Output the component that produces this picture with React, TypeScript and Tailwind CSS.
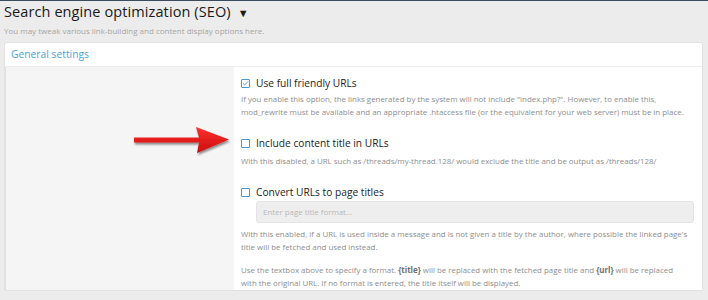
import { Check } from "lucide-react";

function Checkbox({ checked }: { checked?: boolean }) {
  return (
    <span className="flex h-[9px] w-[9px] shrink-0 items-center justify-center rounded-[1px] border border-[#4d9ad0] bg-white">
      {checked && <Check size={7} strokeWidth={3} className="text-[#4d9ad0]" />}
    </span>
  );
}

function Option({
  label,
  checked,
  children,
}: {
  label: string;
  checked?: boolean;
  children?: React.ReactNode;
}) {
  return (
    <div>
      <label className="flex h-[14px] items-center gap-[6px] text-[10.2px] text-[#1d1d1d]">
        <Checkbox checked={checked} />
        <span>{label}</span>
      </label>
      {children}
    </div>
  );
}

function Arrow() {
  return (
    <svg width="100" height="34" viewBox="0 0 100 34" className="absolute left-[132px] top-[124px]">
      <defs>
        <linearGradient id="red" x1="0" y1="0" x2="0" y2="1">
          <stop offset="0" stopColor="#ff3030" />
          <stop offset="1" stopColor="#c80d0d" />
        </linearGradient>
        <filter id="sh" x="-20%" y="-40%" width="140%" height="180%">
          <feDropShadow dx="1" dy="2" stdDeviation="1.2" floodColor="#000" floodOpacity="0.45" />
        </filter>
      </defs>
      <path
        d="M2 13.5 L67 13.5 L64 3 L97 15.5 L65 29 L67 18.5 L2 18.5 Z"
        fill="url(#red)"
        filter="url(#sh)"
      />
    </svg>
  );
}

export default function App() {
  return (
    <div
      className="relative h-[300px] w-[708px] overflow-hidden bg-[#ececec]"
      style={{ fontFamily: '"Open Sans", "Noto Sans", sans-serif' }}
    >
      <div className="h-[1px] bg-[#3d4c5c]" />
      <div className="px-[4px]">
        <h1 className="flex h-[23px] items-center gap-[7px] text-[14.5px] leading-none tracking-[0.1px] text-[#1a1a1a]">
          <span>Search engine optimization (SEO)</span>
          <span className="text-[11px]">▼</span>
        </h1>
        <p className="h-[13px] text-[8px] leading-[13px] text-[#a5a5a5]">
          You may tweak various link-building and content display options here.
        </p>
      </div>

      <div className="ml-[4px] mr-[5px] mt-[5px] rounded-t-[3px] border border-[#e2e2e2] bg-white">
        <div className="flex h-[24px] items-center border-b border-[#ececec] px-[6px] text-[10.3px] text-[#4aa3d6]">
          General settings
        </div>
        <div className="flex">
          <div className="w-[229px] shrink-0 border-l border-[#e0e0e0] bg-[#f5f5f5]" />
          <div className="flex flex-1 flex-col gap-[17px] pl-[7px] pr-[8px] pt-[9px] text-[7.9px] leading-[13px] text-[#8e8e8e]">
            <Option label="Use full friendly URLs" checked>
              <p className="mt-[3px]">
                If you enable this option, the links generated by the system will not include "index.php?". However, to enable this,
                <br />
                mod_rewrite must be available and an appropriate .htaccess file (or the equivalent for your web server) must be in place.
              </p>
            </Option>
            <Option label="Include content title in URLs">
              <p className="mt-[5px]">
                With this disabled, a URL such as /threads/my-thread.128/ would exclude the title and be output as /threads/128/
              </p>
            </Option>
            <Option label="Convert URLs to page titles">
              <div className="ml-[15px] mt-[2px] flex h-[22px] items-center rounded-[3px] border border-[#e4e4e4] bg-[#eeeeee] px-[6px] text-[#b9b9b9]">
                Enter page title format...
              </div>
              <p className="mt-[5px]">
                With this enabled, if a URL is used inside a message and is not given a title by the author, where possible the linked page's
                <br />
                title will be fetched and used instead.
              </p>
              <p className="mt-[10px]">
                Use the textbox above to specify a format. <b className="text-[#6e6e6e]">{"{title}"}</b> will be replaced with the fetched page title and <b className="text-[#6e6e6e]">{"{url}"}</b> will be replaced
                <br />
                with the original URL. If no format is entered, the title itself will be displayed.
              </p>
            </Option>
          </div>
        </div>
      </div>
      <Arrow />
    </div>
  );
}
